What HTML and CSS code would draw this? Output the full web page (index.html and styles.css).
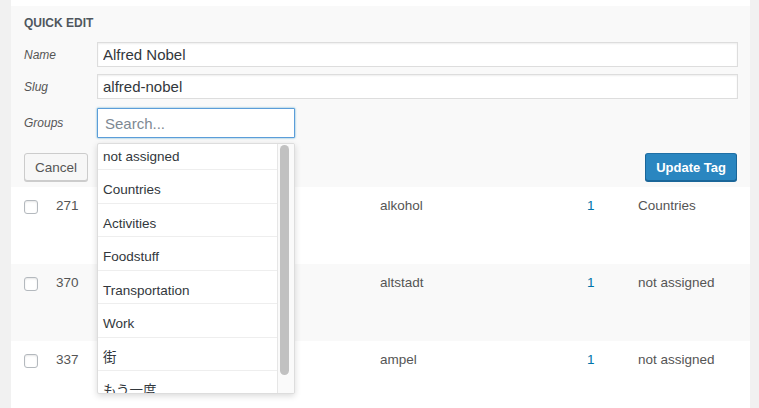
FILE: index.html
```html
<!DOCTYPE html>
<html>
<head>
<meta charset="utf-8">
<link rel="stylesheet" href="styles.css">
</head>
<body>
<div class="wrap">
  <div class="quick-edit">
    <div class="qe-title">QUICK EDIT</div>
    <div class="field">
      <span class="label">Name</span>
      <input class="text" type="text" value="Alfred Nobel">
    </div>
    <div class="field slug">
      <span class="label">Slug</span>
      <input class="text" type="text" value="alfred-nobel">
    </div>
    <div class="field groups">
      <span class="label">Groups</span>
      <div class="group-select">
        <input class="search" type="text" placeholder="Search...">
        <div class="dropdown">
          <div class="list">
            <div class="item first">not assigned</div>
            <div class="item">Countries</div>
            <div class="item">Activities</div>
            <div class="item">Foodstuff</div>
            <div class="item">Transportation</div>
            <div class="item">Work</div>
            <div class="item cjk">街</div>
            <div class="item cjk">もう一度</div>
          </div>
          <div class="track"><div class="thumb"></div></div>
        </div>
      </div>
    </div>
    <div class="actions">
      <button class="btn">Cancel</button>
      <button class="btn primary">Update Tag</button>
    </div>
  </div>
  <div class="row">
    <div><span class="cb"></span></div>
    <div>271</div>
    <div>alkohol</div>
    <div class="count">1</div>
    <div>Countries</div>
  </div>
  <div class="row alt">
    <div><span class="cb"></span></div>
    <div>370</div>
    <div>altstadt</div>
    <div class="count">1</div>
    <div>not assigned</div>
  </div>
  <div class="row">
    <div><span class="cb"></span></div>
    <div>337</div>
    <div>ampel</div>
    <div class="count">1</div>
    <div>not assigned</div>
  </div>
</div>
</body>
</html>
```

FILE: styles.css
```css
html, body {
  margin: 0;
  height: 100%;
  overflow: hidden;
}
body {
  background: #f1f1f1;
  font-family: "Liberation Sans", Arial, sans-serif;
}
.wrap {
  margin-left: 11px;
  width: 739px;
  height: 408px;
  background: #fff;
  padding-top: 6px;
  box-sizing: border-box;
  overflow: hidden;
}
.quick-edit {
  background: #f9f9f9;
  padding: 9px 12px 6px 13px;
}
.qe-title {
  font-size: 12px;
  font-weight: bold;
  line-height: 16px;
  color: #50575e;
  margin-bottom: 11px;
}
.field {
  display: flex;
  align-items: center;
}
.field.slug { margin-top: 7px; }
.field.groups { margin-top: 9px; }
.label {
  width: 73px;
  flex: none;
  font-size: 12px;
  font-style: italic;
  color: #555;
}
.text {
  flex: 1;
  height: 25px;
  margin: 0;
  border: 1px solid #ddd;
  box-shadow: inset 0 1px 2px rgba(0,0,0,.07);
  padding: 0 5px;
  font: 15px "Liberation Sans", Arial, sans-serif;
  color: #32373c;
  background: #fff;
  box-sizing: border-box;
  outline: none;
}
.group-select {
  position: relative;
  width: 198px;
}
.search {
  display: block;
  width: 198px;
  height: 30px;
  margin: 0;
  box-sizing: border-box;
  border: 1px solid #5b9dd9;
  border-radius: 1px;
  box-shadow: 0 0 2px rgba(30,140,190,.8);
  padding: 0 7px;
  font: 15px "Liberation Sans", Arial, sans-serif;
  color: #32373c;
  background: #fff;
  outline: none;
}
.search::placeholder { color: #7e8993; }
.dropdown {
  position: absolute;
  top: 35px;
  left: 0;
  width: 198px;
  height: 251px;
  box-sizing: border-box;
  border: 1px solid #ddd;
  border-radius: 2px;
  background: #fff;
  box-shadow: 0 2px 6px rgba(0,0,0,.15);
  display: flex;
  z-index: 10;
  overflow: hidden;
}
.list {
  flex: 1;
  overflow: hidden;
}
.item {
  height: 33.5px;
  box-sizing: border-box;
  border-bottom: 1px solid #eee;
  padding: 10px 0 0 5px;
  font-size: 13.5px;
  line-height: 20px;
  color: #32373c;
}
.item.first {
  height: 26px;
  padding-top: 2.5px;
}
.item.cjk {
  font-family: "Liberation Sans", "Noto Sans CJK JP", sans-serif;
}
.track {
  width: 14px;
  flex: none;
  border-left: 1px solid #e6e6e6;
  background: #fafafa;
  padding: 1px 0 0 2px;
}
.thumb {
  width: 9px;
  height: 230px;
  border-radius: 4.5px;
  background: #c1c1c1;
}
.actions {
  display: flex;
  justify-content: space-between;
  margin-top: 15px;
  padding-right: 1px;
}
.btn {
  height: 28px;
  margin: 0;
  padding: 0 10px;
  border: 1px solid #ccc;
  border-radius: 3px;
  background: #f7f7f7;
  box-shadow: 0 1px 0 #ccc;
  font: 13.5px "Liberation Sans", Arial, sans-serif;
  color: #555;
}
.btn.primary {
  background: #2a86c0;
  border-color: #1f70a6 #1a6699 #1a6699;
  box-shadow: 0 1px 0 #1a6699;
  color: #fff;
  font-size: 13px;
  font-weight: bold;
}
.row {
  display: grid;
  grid-template-columns: 32px 324px 207px 51px 1fr;
  height: 77px;
  box-sizing: border-box;
  padding: 9px 0 0 13px;
  font-size: 13.5px;
  line-height: 19px;
  color: #555;
}
.row.alt { background: #f9f9f9; }
.cb {
  display: block;
  width: 14px;
  height: 14px;
  margin-top: 4px;
  box-sizing: border-box;
  border: 1px solid #b4b9be;
  border-radius: 3px;
  background: #fff;
  box-shadow: inset 0 1px 2px rgba(0,0,0,.1);
}
.count { color: #0073aa; }
```
